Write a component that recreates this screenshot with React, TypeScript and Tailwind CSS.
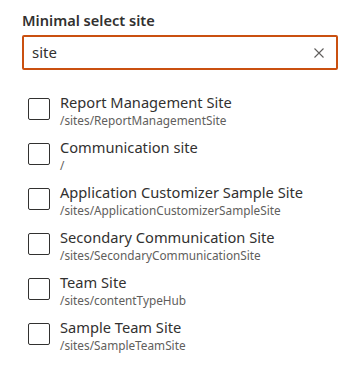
import React, { useState } from 'react';

const sites = [
  { title: 'Report Management Site', url: '/sites/ReportManagementSite' },
  { title: 'Communication site', url: '/' },
  { title: 'Application Customizer Sample Site', url: '/sites/ApplicationCustomizerSampleSite' },
  { title: 'Secondary Communication Site', url: '/sites/SecondaryCommunicationSite' },
  { title: 'Team Site', url: '/sites/contentTypeHub' },
  { title: 'Sample Team Site', url: '/sites/SampleTeamSite' },
];

export default function App() {
  const [query, setQuery] = useState('site');
  const [checked, setChecked] = useState<string[]>([]);

  const toggle = (url: string) =>
    setChecked(c => (c.includes(url) ? c.filter(u => u !== url) : [...c, url]));

  return (
    <div className="min-h-screen bg-white pl-[22px] pr-[18px] pt-[10px] text-[#323130]" style={{ fontFamily: '"Noto Sans", sans-serif' }}>
      <label className="block text-[14.6px] font-semibold leading-[20px] mb-[5px]">Minimal select site</label>
      <div className="flex items-center h-[35px] border-2 border-[#ca5010] rounded-[2px] pl-[8px] pr-[12px]">
        <input
          value={query}
          onChange={e => setQuery(e.target.value)}
          className="flex-1 outline-none text-[15px] text-[#323130] bg-transparent"
        />
        <svg width="10" height="10" viewBox="0 0 10 10" className="shrink-0">
          <path d="M0.5 0.5L9.5 9.5M9.5 0.5L0.5 9.5" stroke="#605e5c" strokeWidth="1.1" />
        </svg>
      </div>

      <div className="mt-[22px] pl-[6px] flex flex-col gap-[9px]">
        {sites.map(s => (
          <div key={s.url} className="flex items-start gap-[10px] cursor-pointer" onClick={() => toggle(s.url)}>
            <div className="w-[22px] h-[22px] mt-[6px] border border-[#323130] rounded-[2px] shrink-0 flex items-center justify-center">
              {checked.includes(s.url) && (
                <svg width="14" height="14" viewBox="0 0 14 14">
                  <path d="M2 7.5L5.5 11L12 3" stroke="#323130" strokeWidth="1.3" fill="none" />
                </svg>
              )}
            </div>
            <div className="flex flex-col">
              <span className="text-[14.65px] leading-[20px] text-[#323130]">{s.title}</span>
              <span className="text-[11.8px] leading-[16px] text-[#605e5c]">{s.url}</span>
            </div>
          </div>
        ))}
      </div>
    </div>
  );
}
